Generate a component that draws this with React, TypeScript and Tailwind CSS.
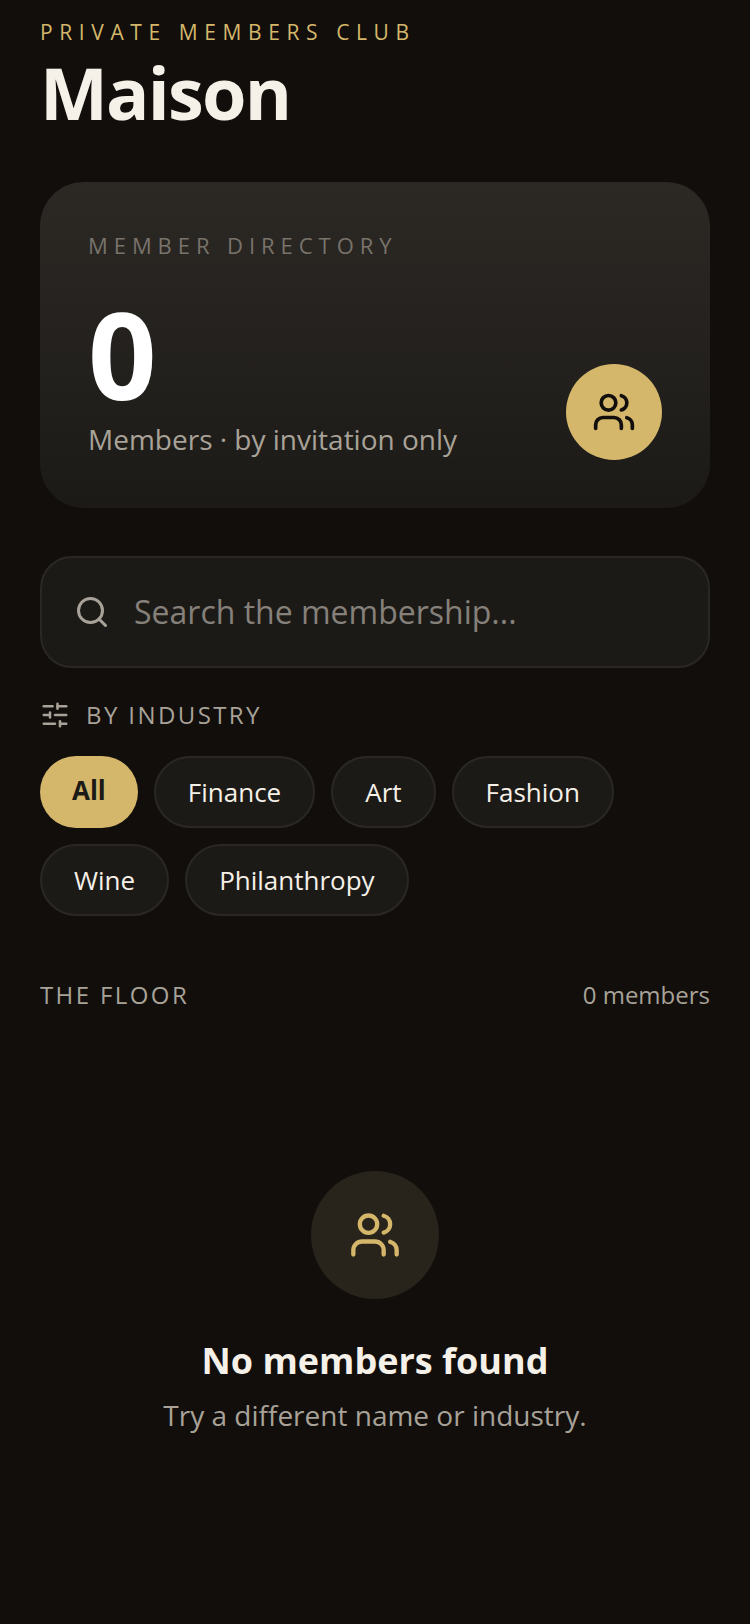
import { Search, SlidersHorizontal, Users } from 'lucide-react';

const industries = ['All', 'Finance', 'Art', 'Fashion', 'Wine', 'Philanthropy'];

export default function App() {
  return (
    <div className="min-h-[1624px] bg-[#110e0c] px-10 font-['Open_Sans','Noto_Sans',sans-serif]">
      {/* Header */}
      <p className="pt-[16px] text-[21px] leading-[32px] tracking-[6.6px] text-[#d4b76a]">PRIVATE MEMBERS CLUB</p>
      <h1 className="mt-[4px] text-[72px] leading-[80px] font-bold tracking-[-0.025em] text-[#f5f0e8]">Maison</h1>

      {/* Directory card */}
      <div className="mt-[50px] flex h-[326px] items-end justify-between rounded-[44px] bg-gradient-to-b from-[#2c2925] to-[#1c1a17] px-12 pb-12">
        <div className="flex h-full flex-col pt-[49px]">
          <p className="text-[22px] leading-[28px] tracking-[0.27em] text-[#78736b]">MEMBER DIRECTORY</p>
          <p className="mt-[35px] text-[120px] leading-[120px] font-bold text-white">0</p>
          <p className="mt-[7px] text-[28px] leading-[36px] text-[#a8a298]">Members · by invitation only</p>
        </div>
        <div className="flex h-24 w-24 items-center justify-center rounded-full bg-[#d4b76a]">
          <Users size={44} strokeWidth={2} className="text-[#110e0c]" />
        </div>
      </div>

      {/* Search */}
      <div className="mt-[48px] flex h-[112px] items-center gap-[24px] rounded-[32px] border-2 border-[#2a2825] bg-[#1c1a17] px-[32px]">
        <Search size={36} strokeWidth={2} className="text-[#a8a298]" />
        <span className="text-[32px] text-[#85807a]">Search the membership...</span>
      </div>

      {/* Filters */}
      <div className="mt-[31px] flex items-center gap-[16px]">
        <SlidersHorizontal size={30} strokeWidth={2} className="text-[#a8a298]" />
        <span className="text-[24px] leading-[32px] tracking-[0.1em] text-[#a8a298]">BY INDUSTRY</span>
      </div>
      <div className="mt-[25px] flex flex-wrap gap-[16px]">
        {industries.map((name) =>
          name === 'All' ? (
            <button key={name} className="h-[72px] rounded-full bg-[#d4b76a] px-[32px] pb-[3px] text-[26px] font-bold text-[#1c1a17]">
              {name}
            </button>
          ) : (
            <button key={name} className="h-[72px] rounded-full border-2 border-[#2a2825] bg-[#1c1a17] px-[32px] text-[26px] text-[#f5f0e8]">
              {name}
            </button>
          ),
        )}
      </div>

      {/* Results */}
      <div className="mt-[63px] flex items-center justify-between">
        <span className="text-[24px] leading-[32px] tracking-[0.1em] text-[#a8a298]">THE FLOOR</span>
        <span className="text-[24px] leading-[32px] text-[#a8a298]">0 members</span>
      </div>

      {/* Empty state */}
      <div className="mt-[160px] flex flex-col items-center">
        <div className="flex h-32 w-32 items-center justify-center rounded-full bg-[#28231b]">
          <Users size={52} strokeWidth={2} className="text-[#d4b76a]" />
        </div>
        <h2 className="mt-[38px] text-[36px] leading-[48px] font-bold text-[#f5f0e8]">No members found</h2>
        <p className="mt-[10px] text-[28px] leading-[40px] text-[#a8a298]">Try a different name or industry.</p>
      </div>
    </div>
  );
}
